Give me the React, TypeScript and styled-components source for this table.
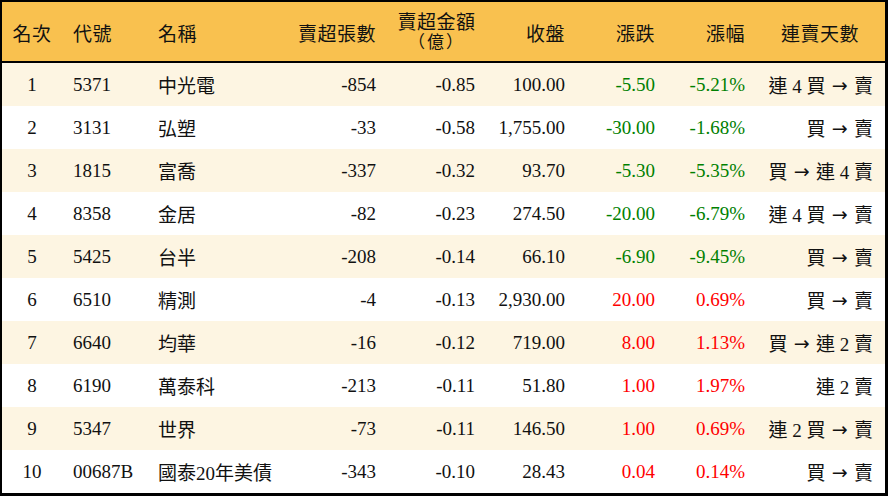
import React from "react";
import styled, { createGlobalStyle } from "styled-components";

interface StockRow {
    rank: number;
    code: string;
    name: string;
    lots: string;
    amount: string;
    close: string;
    change: string;
    pct: string;
    streak: string;
}

const ROWS: StockRow[] = [
    { rank: 1, code: "5371", name: "中光電", lots: "-854", amount: "-0.85", close: "100.00", change: "-5.50", pct: "-5.21%", streak: "連 4 買 → 賣" },
    { rank: 2, code: "3131", name: "弘塑", lots: "-33", amount: "-0.58", close: "1,755.00", change: "-30.00", pct: "-1.68%", streak: "買 → 賣" },
    { rank: 3, code: "1815", name: "富喬", lots: "-337", amount: "-0.32", close: "93.70", change: "-5.30", pct: "-5.35%", streak: "買 → 連 4 賣" },
    { rank: 4, code: "8358", name: "金居", lots: "-82", amount: "-0.23", close: "274.50", change: "-20.00", pct: "-6.79%", streak: "連 4 買 → 賣" },
    { rank: 5, code: "5425", name: "台半", lots: "-208", amount: "-0.14", close: "66.10", change: "-6.90", pct: "-9.45%", streak: "買 → 賣" },
    { rank: 6, code: "6510", name: "精測", lots: "-4", amount: "-0.13", close: "2,930.00", change: "20.00", pct: "0.69%", streak: "買 → 賣" },
    { rank: 7, code: "6640", name: "均華", lots: "-16", amount: "-0.12", close: "719.00", change: "8.00", pct: "1.13%", streak: "買 → 連 2 賣" },
    { rank: 8, code: "6190", name: "萬泰科", lots: "-213", amount: "-0.11", close: "51.80", change: "1.00", pct: "1.97%", streak: "連 2 賣" },
    { rank: 9, code: "5347", name: "世界", lots: "-73", amount: "-0.11", close: "146.50", change: "1.00", pct: "0.69%", streak: "連 2 買 → 賣" },
    { rank: 10, code: "00687B", name: "國泰20年美債", lots: "-343", amount: "-0.10", close: "28.43", change: "0.04", pct: "0.14%", streak: "買 → 賣" },
];

type Align = "left" | "center" | "right";
type Tone = "up" | "down" | "plain";

const toneOf = (value: string): Tone => (value.startsWith("-") ? "down" : "up");

// the arrow gets its own font so it is as wide as in the original
const Streak: React.FC<{ text: string }> = ({ text }) => {
    const parts = text.split("→");
    return (
        <>
            {parts.map((part, i) => (
                <React.Fragment key={i}>
                    {i > 0 && <Arrow>→</Arrow>}
                    {part}
                </React.Fragment>
            ))}
        </>
    );
};

const App: React.FC = () => {
    return (
        <>
            <GlobalStyle />
            <Table>
                <HeaderRow>
                    <HeadCell $align="center">名次</HeadCell>
                    <HeadCell $align="left">代號</HeadCell>
                    <HeadCell $align="left">名稱</HeadCell>
                    <HeadCell $align="right">賣超張數</HeadCell>
                    <HeadCell $align="center">
                        <Stack>
                            <span>賣超金額</span>
                            <Parens>（億）</Parens>
                        </Stack>
                    </HeadCell>
                    <HeadCell $align="right">收盤</HeadCell>
                    <HeadCell $align="right">漲跌</HeadCell>
                    <HeadCell $align="right">漲幅</HeadCell>
                    <HeadCell $align="center" $last>連賣天數</HeadCell>
                </HeaderRow>
                {ROWS.map((row, index) => (
                    <Row key={row.rank} $striped={index % 2 === 0}>
                        <Cell $align="center">{row.rank}</Cell>
                        <Cell $align="left">{row.code}</Cell>
                        <Cell $align="left">{row.name}</Cell>
                        <Cell $align="right">{row.lots}</Cell>
                        <Cell $align="right">{row.amount}</Cell>
                        <Cell $align="right">{row.close}</Cell>
                        <Cell $align="right" $tone={toneOf(row.change)}>{row.change}</Cell>
                        <Cell $align="right" $tone={toneOf(row.pct)}>{row.pct}</Cell>
                        <Cell $align="right" $last>
                            <Streak text={row.streak} />
                        </Cell>
                    </Row>
                ))}
            </Table>
        </>
    );
};

const GlobalStyle = createGlobalStyle`
    * {
        box-sizing: border-box;
    }

    body {
        margin: 0;
        background: #ffffff;
        font-family: "Liberation Serif", "Noto Sans CJK TC", serif;
        color: #111111;
    }
`;

const COLUMNS = "60px 85px 140px 100px 99px 90px 90px 90px 130px";

const Table = styled.div`
    width: 888px;
    height: 496px;
    border: 2px solid #000000;
    border-right-width: 3px;
    border-bottom-width: 3px;
    display: flex;
    flex-direction: column;
    overflow: hidden;
`;

const HeaderRow = styled.div`
    display: grid;
    grid-template-columns: ${COLUMNS};
    height: 61px;
    background-color: #f9c14f;
    border-bottom: 2px solid #000000;
    font-size: 19px;
`;

const Row = styled.div<{ $striped: boolean }>`
    display: grid;
    grid-template-columns: ${COLUMNS};
    flex: 1;
    background-color: ${({ $striped }) => ($striped ? "#fdf5e2" : "#ffffff")};
    font-size: 19px;
`;

const TONES: Record<Tone, string> = {
    up: "#ff0000",
    down: "#008000",
    plain: "#111111",
};

const Cell = styled.div<{ $align: Align; $tone?: Tone; $last?: boolean }>`
    display: flex;
    align-items: center;
    justify-content: ${({ $align }) =>
        $align === "left" ? "flex-start" : $align === "right" ? "flex-end" : "center"};
    padding: 0 ${({ $last }) => ($last ? "13px" : "11px")} 0 11px;
    color: ${({ $tone }) => TONES[$tone ?? "plain"]};
    white-space: pre;
`;

const HeadCell = styled(Cell)`
    padding-top: 1px;
    letter-spacing: 0.5px;
`;

const Stack = styled.div`
    display: flex;
    flex-direction: column;
    align-items: center;
    line-height: 20px;
    padding-top: 2px;
`;

const Parens = styled.span`
    font-size: 17px;
    letter-spacing: 2px;
`;

const Arrow = styled.span`
    font-family: "DejaVu Sans", sans-serif;
    font-size: 19px;
    display: inline-block;
    width: 19px;
    text-align: center;
`;

export default App;
